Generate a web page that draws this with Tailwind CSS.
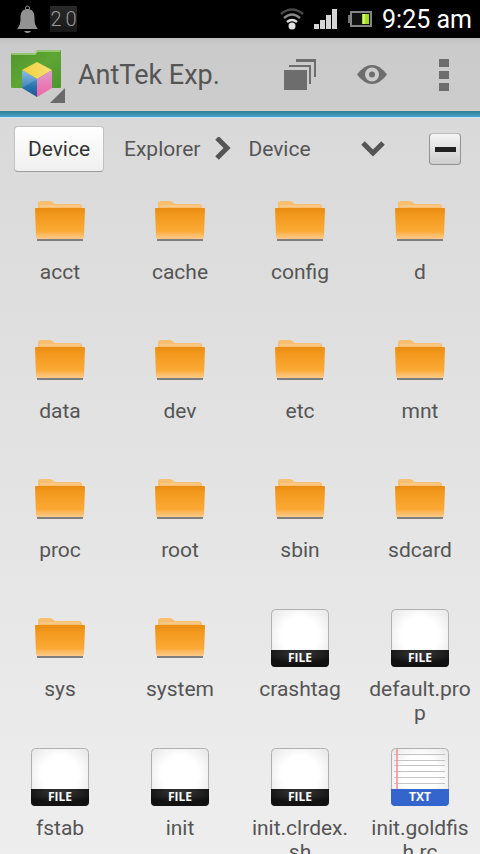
<!DOCTYPE html>
<html lang="en">
<head>
    <meta charset="UTF-8">
    <meta name="viewport" content="width=device-width, initial-scale=1">
    <title>AntTek Exp.</title>
    <script src="https://cdn.jsdelivr.net/npm/@tailwindcss/browser@4"></script>
</head>
<body class="h-screen flex flex-col overflow-hidden bg-linear-to-b from-[#d6d6d6] to-[#eeeeee] font-[Roboto,sans-serif] text-[#555555]">

    <!-- Shared icons -->
    <svg class="absolute size-0" aria-hidden="true">
        <defs>
            <linearGradient id="folderFront" x1="0" y1="0" x2="0" y2="1">
                <stop offset="0" stop-color="#e98c12"/>
                <stop offset=".2" stop-color="#f2981c"/>
                <stop offset=".75" stop-color="#fba935"/>
                <stop offset=".84" stop-color="#fcb75a"/>
                <stop offset="1" stop-color="#fcca88"/>
            </linearGradient>
            <radialGradient id="paper" cx=".5" cy=".45" r=".65">
                <stop offset=".5" stop-color="#ffffff"/>
                <stop offset="1" stop-color="#e6e6e6"/>
            </radialGradient>
            <radialGradient id="fileBand" cx=".5" cy=".2" r=".6">
                <stop offset="0" stop-color="#3a3a3a"/>
                <stop offset="1" stop-color="#111111"/>
            </radialGradient>
            <symbol id="folder" viewBox="0 0 58 58">
                <path d="M6 48h46" stroke="#666666" stroke-width="2" opacity=".8"/>
                <path d="M7 20v-8q0-3 3-3h9q2 0 3 1.500t3 1.500h23q3 0 3 3v5z" fill="#f8bf70"/>
                <path d="M9 14h40" stroke="#fbd098" stroke-width="1"/>
                <path d="M4 17q0-1 1-1h48q1 0 1 1l-1 28q0 2-2 2H7q-2 0-2-2z" fill="url(#folderFront)"/>
            </symbol>
            <symbol id="file" viewBox="0 0 58 58">
                <rect x=".5" y=".5" width="57" height="57" rx="4" fill="url(#paper)" stroke="#b0b0b0"/>
                <path d="M0 41h58v13q0 4-4 4H4q-4 0-4-4z" fill="url(#fileBand)"/>
                <text x="29" y="53" text-anchor="middle" font-family="Open Sans, sans-serif" font-weight="700" font-size="12" fill="#ffffff">FILE</text>
            </symbol>
            <symbol id="txt" viewBox="0 0 58 58">
                <rect x=".5" y=".5" width="57" height="57" rx="4" fill="url(#paper)" stroke="#b0b0b0"/>
                <path d="M3 6.500h51M3 12.500h51M3 17.500h51M3 23.500h51M3 29.500h51M3 35.500h51" stroke="#c4c4c4"/>
                <path d="M6 1v40" stroke="#f58c8c" stroke-width="1.500"/>
                <path d="M0 41h58v13q0 4-4 4H4q-4 0-4-4z" fill="#3465cc"/>
                <text x="29" y="53" text-anchor="middle" font-family="Open Sans, sans-serif" font-weight="700" font-size="12" fill="#ffffff">TXT</text>
            </symbol>
        </defs>
    </svg>

    <!-- Status bar -->
    <div class="h-[38px] shrink-0 flex items-center bg-black pl-4 pr-2 text-white">
        <svg class="w-6 h-8" viewBox="0 0 24 32" fill="#929292">
            <circle cx="11.500" cy="5" r="2" fill="none" stroke="#929292"/>
            <path d="M11.500 6C17 6 18.500 10 18.500 15c0 6 1 8 3.500 11H1c2.500-3 3.500-5 3.500-11 0-5 1.500-9 7-9z"/>
            <path d="M8 28h7q-1 2-3.500 2T8 28z"/>
        </svg>
        <div class="ml-[10px] w-[27px] h-[26px] flex items-center justify-center gap-1 bg-linear-to-b from-[#2a2a2a] to-[#181818] text-xl font-light text-[#999999]">
            <span>2</span><span>0</span>
        </div>
        <div class="ml-auto flex items-center">
            <svg class="w-6 h-6" viewBox="0 0 24 24" fill="none" stroke-width="2.500">
                <path d="M1 7q11-9 22 0" stroke="#484848"/>
                <path d="M4 11q8-7 16 0" stroke="#858585"/>
                <path d="M7 15q5-4 10 0" stroke="#dddddd"/>
                <circle cx="12" cy="19" r="3.500" fill="#e2e2e2"/>
            </svg>
            <svg class="ml-[10px] w-6 h-6" viewBox="0 0 24 24" fill="#d6d6d6">
                <path d="M0 17h5v5H0zM6 13h5v9H6zM12 8h5v14h-5zM18 2h5v20h-5z"/>
            </svg>
            <svg class="ml-[10px] w-6 h-6" viewBox="0 0 24 24">
                <path d="M0 8h3v8H0z" fill="#777777"/>
                <rect x="3" y="5" width="20" height="14" fill="#111111" stroke="#858585" stroke-width="2"/>
                <path d="M14 7h7v10h-7z" fill="#a4dc28"/>
                <path d="M15 7h2v10h-2z" fill="#d2f56a"/>
            </svg>
            <span class="ml-[10px] pt-[2px] text-[25px] leading-8">9:25 am</span>
        </div>
    </div>

    <!-- Action bar -->
    <header class="h-[73px] shrink-0 flex items-center bg-linear-to-b from-[#c0c0c0] via-[#cbcbcb] via-10% to-[#cccccc] pl-2">
        <button class="w-[60px] h-[60px]" aria-label="Switch view">
            <svg viewBox="0 0 60 60" class="w-full h-full">
                <defs>
                    <linearGradient id="green" x1="0" y1="0" x2="1" y2="1">
                        <stop offset="0" stop-color="#4f962c"/>
                        <stop offset=".5" stop-color="#5fa534"/>
                        <stop offset="1" stop-color="#4c9730"/>
                    </linearGradient>
                    <linearGradient id="cubeTop" x1="0" y1="0" x2="1" y2="0">
                        <stop offset="0" stop-color="#f2cf3c"/>
                        <stop offset="1" stop-color="#f8e171"/>
                    </linearGradient>
                    <linearGradient id="cubeLeft" x1="0" y1="0" x2="0" y2="1">
                        <stop offset="0" stop-color="#73b6e0"/>
                        <stop offset=".6" stop-color="#2b74b0"/>
                        <stop offset="1" stop-color="#1c5892"/>
                    </linearGradient>
                    <linearGradient id="cubeRight" x1="0" y1="0" x2="0" y2="1">
                        <stop offset="0" stop-color="#e29bd0"/>
                        <stop offset="1" stop-color="#ef62a5"/>
                    </linearGradient>
                </defs>
                <path d="M3 10q0-2 2-2h22l2-3h23q1 0 1 1v36q0 1-1 1H4q-1 0-1-1z" fill="url(#green)"/>
                <path d="M4 9h23l2-3h23" fill="none" stroke="#a9d184" stroke-width="1.500"/>
                <path d="M29 17l15 8-15 9-15-9z" fill="url(#cubeTop)"/>
                <path d="M14 25l15 9v18l-15-9z" fill="url(#cubeLeft)"/>
                <path d="M44 25v18l-15 9V34z" fill="url(#cubeRight)"/>
                <path d="M14 25l15 9-15 9z" fill="#ffffff" opacity=".15"/>
                <path d="M57 43v15H42z" fill="#6a6a6a"/>
            </svg>
        </button>
        <h1 class="ml-[10px] text-[27px] leading-8">AntTek Exp.</h1>
        <div class="ml-auto flex items-center text-[#6d6d6d]">
            <button class="w-[72px] h-[60px] flex items-center justify-center" aria-label="Windows">
                <svg class="w-8 h-8" viewBox="0 0 32 32" fill="none" stroke="currentColor">
                    <path d="M12 1h20" stroke-width="4"/>
                    <path d="M5 7h22" stroke-width="2"/>
                    <path d="M31 1v17M26 7v18" stroke-width="2"/>
                    <path d="M0 11h23v20H0z" fill="currentColor" stroke="none"/>
                </svg>
            </button>
            <button class="w-[72px] h-[60px] flex items-center justify-center" aria-label="Show hidden files">
                <svg class="w-[30px] h-5" viewBox="0 0 30 20">
                    <path d="M0 9.500C5 3 10 0 15 0s10 3 15 9.500C25 16 20 19 15 19S5 16 0 9.500z" fill="currentColor"/>
                    <circle cx="15" cy="9.500" r="5" fill="none" stroke="#cccccc" stroke-width="4"/>
                </svg>
            </button>
            <button class="w-[72px] h-[60px] flex items-center justify-center" aria-label="More options">
                <svg class="w-[10px] h-8" viewBox="0 0 10 32" fill="currentColor">
                    <path d="M0 0h10v8H0zM0 12h10v8H0zM0 24h10v8H0z"/>
                </svg>
            </button>
        </div>
    </header>
    <div class="h-[7px] shrink-0 border-b border-[#c5e8f2] bg-linear-to-b from-[#32808f] to-[#48a2cf]"></div>

    <!-- Path bar -->
    <nav class="h-[62px] shrink-0 flex items-center pl-[14px] pr-[19px] text-[21px] leading-6" aria-label="Path">
        <button class="w-[90px] h-[46px] rounded border border-[#c0c0c0] border-b-[#9a9a9a] bg-linear-to-b from-white to-[#f0f0f0] text-[#333333]">Device</button>
        <a href="#explorer" class="ml-5">Explorer</a>
        <svg class="ml-[15px] w-4 h-6" viewBox="0 0 16 24" fill="none" stroke="currentColor" stroke-width="5">
            <path d="M2 1l10 10L2 21"/>
        </svg>
        <a href="#device" class="ml-[17px]">Device</a>
        <button class="ml-auto w-6 h-6" aria-label="Show path">
            <svg class="w-6 h-6" viewBox="0 0 24 24" fill="none" stroke="currentColor" stroke-width="5">
                <path d="M2 6l10 10L22 6"/>
            </svg>
        </button>
        <button class="ml-11 w-8 h-8 flex items-center justify-center rounded border border-[#929292] border-t-[#b8b8b8] bg-linear-to-b from-[#f4f4f4] to-[#cfcfcf]" aria-label="Collapse">
            <span class="w-[21px] h-[5px] bg-[#222222]"></span>
        </button>
    </nav>

    <!-- Files -->
    <main class="flex-1 min-h-0 overflow-hidden pt-3">
        <ul id="fileGrid" class="grid grid-cols-4 auto-rows-[139px]"></ul>
    </main>

    <script>
        const files = [
            ['folder', 'acct'], ['folder', 'cache'], ['folder', 'config'], ['folder', 'd'],
            ['folder', 'data'], ['folder', 'dev'], ['folder', 'etc'], ['folder', 'mnt'],
            ['folder', 'proc'], ['folder', 'root'], ['folder', 'sbin'], ['folder', 'sdcard'],
            ['folder', 'sys'], ['folder', 'system'], ['file', 'crashtag'], ['file', 'default.prop'],
            ['file', 'fstab'], ['file', 'init'], ['file', 'init.clrdex.sh'], ['txt', 'init.goldfish.rc']
        ];

        const grid = document.getElementById('fileGrid');
        files.forEach(([icon, name]) => {
            const li = document.createElement('li');
            li.className = 'flex flex-col items-center px-2';
            li.innerHTML = `
                <svg class="w-[58px] h-[58px] shrink-0"><use href="#${icon}"></use></svg>
                <span class="mt-[10px] w-full text-center text-[21px] leading-6 break-all">${name}</span>
            `;
            grid.appendChild(li);
        });
    </script>
</body>
</html>
